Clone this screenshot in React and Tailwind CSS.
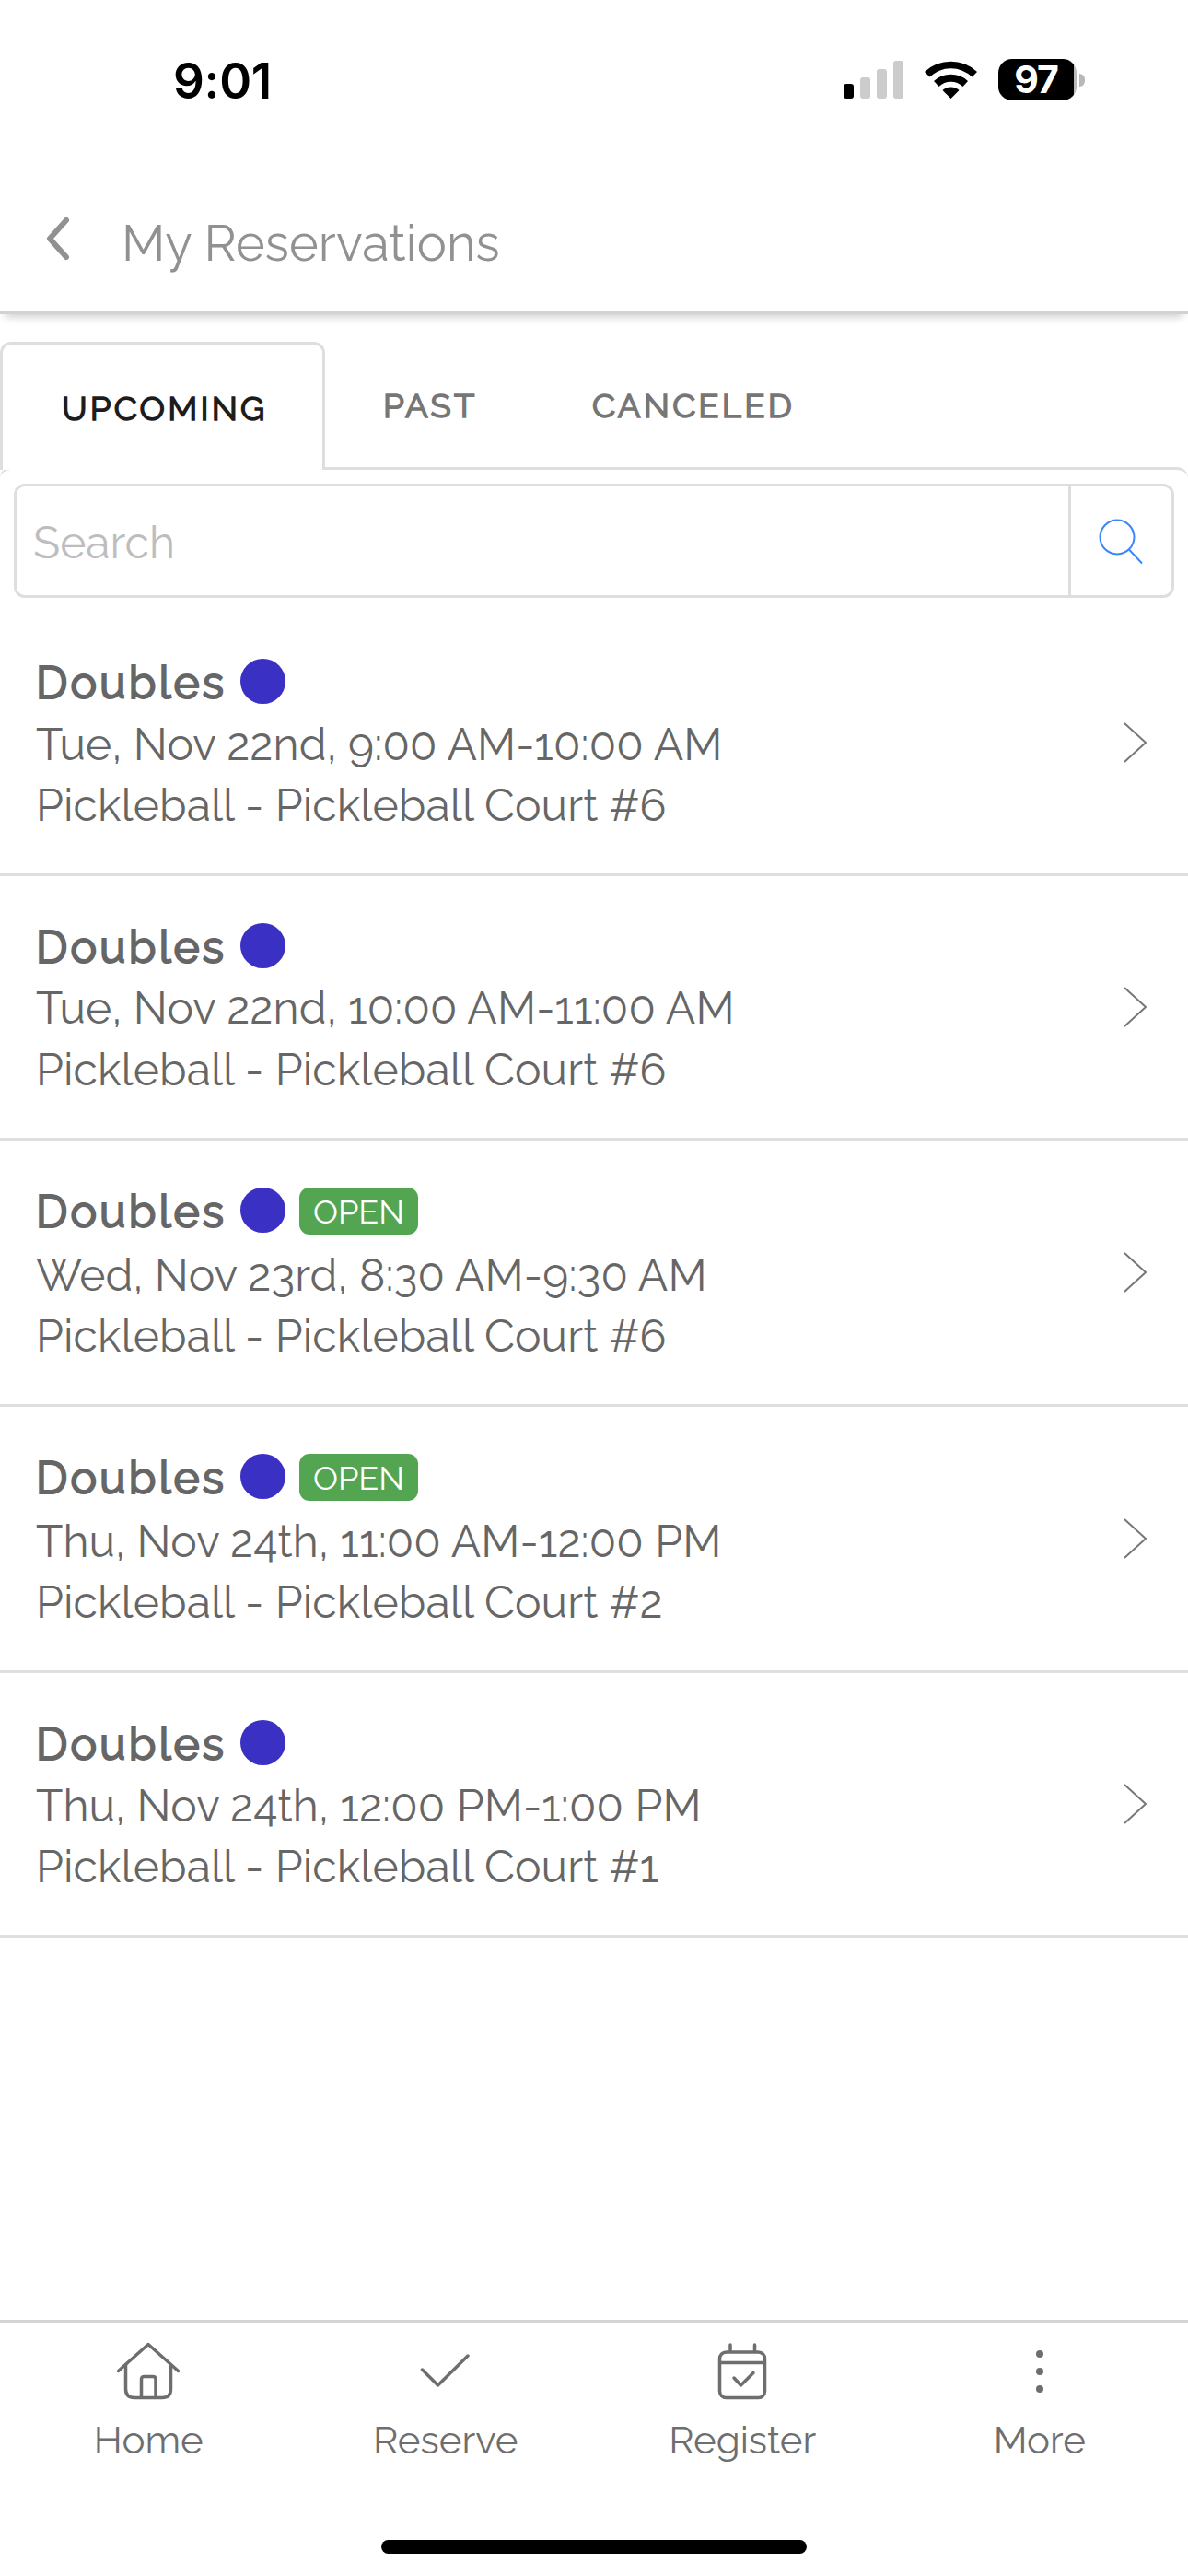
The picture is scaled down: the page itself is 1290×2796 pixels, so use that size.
import clsx from "clsx";

const tabs = ["Upcoming", "Past", "Canceled"];

const reservations = [
  { id: 1, date: "Tue, Nov 22nd, 9:00 AM-10:00 AM", court: "Pickleball - Pickleball Court #6" },
  { id: 2, date: "Tue, Nov 22nd, 10:00 AM-11:00 AM", court: "Pickleball - Pickleball Court #6" },
  { id: 3, date: "Wed, Nov 23rd, 8:30 AM-9:30 AM", court: "Pickleball - Pickleball Court #6", open: true },
  { id: 4, date: "Thu, Nov 24th, 11:00 AM-12:00 PM", court: "Pickleball - Pickleball Court #2", open: true },
  { id: 5, date: "Thu, Nov 24th, 12:00 PM-1:00 PM", court: "Pickleball - Pickleball Court #1" },
];

function StatusBar() {
  return (
    <div className="flex h-[174px] items-start justify-between pl-[188px] pr-[112px] pt-[64px] text-black">
      <span className="font-['Inter',sans-serif] text-[53px] font-semibold leading-[49px] tracking-[-0.3px]">9:01</span>
      <div className="flex items-start">
        <svg className="mt-[2px] h-[41px] w-[65px]" viewBox="0 0 65 41">
          <rect x="0" y="25" width="11" height="16" rx="3" fill="#000" />
          <rect x="18" y="18" width="11" height="23" rx="3" fill="#ccc" />
          <rect x="36" y="9" width="11" height="32" rx="3" fill="#ccc" />
          <rect x="54" y="0" width="11" height="41" rx="3" fill="#ccc" />
        </svg>
        <svg className="ml-[22px] mt-[1px] h-[42px] w-[59px]" viewBox="0 0 59 42">
          <path d="M1 13 A41.5 41.5 0 0 1 58 13 L52.5 18.5 A33.5 33.5 0 0 0 6.5 18.5 Z" />
          <path d="M11 23 A27 27 0 0 1 48 23 L42.5 29 A19 19 0 0 0 16.5 29 Z" />
          <path d="M20.5 33 A13 13 0 0 1 38.5 33 L29.5 42 Z" />
        </svg>
        <div className="ml-[22px] flex items-center">
          <div className="flex h-[45px] w-[85px] items-center justify-center rounded-[15px] bg-[linear-gradient(to_right,#000_82px,#bbb_82px)] pr-[3px] font-['Inter',sans-serif] text-[41px] font-bold leading-[45px] tracking-[-1px] text-white">
            97
          </div>
          <div className="ml-[3px] h-[14px] w-[6px] rounded-r-full bg-[#b8b8b8]" />
        </div>
      </div>
    </div>
  );
}

function Header() {
  return (
    <header className="flex h-[167px] items-start border-b-3 border-[#d2d2d2] pl-[50px] shadow-[0_9px_9px_-6px_rgba(0,0,0,0.2)]">
      <svg className="mt-[61px] h-[48px] w-[26px]" viewBox="0 0 26 48" fill="none" stroke="#929090" strokeWidth="6" strokeLinecap="round" strokeLinejoin="round">
        <path d="M22 4 L4 24 L22 44" />
      </svg>
      <h1 className="ml-[56px] mt-[58px] text-[54px] leading-[64px] tracking-[0.15px] text-[#929090]">My Reservations</h1>
    </header>
  );
}

function Tabs() {
  return (
    <div className="relative z-10 mt-[30px] flex h-[139px] text-[36.5px] leading-[44px] tracking-[3.2px] [-webkit-text-stroke:1.5px]">
      {tabs.map((tab, i) => (
        <button
          key={tab}
          className={clsx(
            "flex items-start uppercase",
            i === 0 && "w-[353px] rounded-t-xl border-3 border-b-0 border-[#dedede] bg-white pl-[64px] pt-[48px] text-[#1c1c1c]",
            i === 1 && "w-[227px] pl-[63px] pt-[48px] text-[#767676]",
            i === 2 && "flex-1 pl-[63px] pt-[48px] text-[#767676]"
          )}
        >
          {tab}
        </button>
      ))}
    </div>
  );
}

function SearchBox() {
  return (
    <div className="mx-[15px] mt-[15px] flex h-[124px] rounded-xl border-3 border-[#dedede]">
      <div className="flex flex-1 items-center pl-[18px] pt-[4px] text-[48px] text-[#bdbdbd]">Search</div>
      <div className="flex w-[112px] items-center border-l-3 border-[#dedede] pl-[30px] pt-[2px]">
        <svg className="h-[50px] w-[50px]" viewBox="0 0 50 50" fill="none" stroke="#3b86fb" strokeWidth="2">
          <circle cx="20" cy="20" r="18.5" />
          <path d="M33 33.5 L47 48.5" />
        </svg>
      </div>
    </div>
  );
}

function ReservationRow({ item }) {
  return (
    <li className="flex items-center border-b-3 border-[#dfdfdf] pb-[40.3px] pl-[39px] pr-[44px] pt-[44px] text-[48px] leading-[66.5px] text-[#666]">
      <div className="flex-1">
        <div className={clsx("flex items-start", item.open ? "h-[69px]" : "h-[66.5px]")}>
          <span className="w-[222px] tracking-[3.1px] [-webkit-text-stroke:2px]">Doubles</span>
          <span className="mt-[7px] h-[49px] w-[49px] rounded-full bg-[#3a30c4]" />
          {item.open && (
            <span className="ml-[15px] mt-[7px] h-[51px] w-[129px] rounded-[11px] bg-[#54a551] text-center text-[36px] leading-[52px] text-white">
              OPEN
            </span>
          )}
        </div>
        <p className="tracking-[0.15px]">{item.date}</p>
        <p className="tracking-[0.1px]">{item.court}</p>
      </div>
      <svg className="mb-[3px] h-[44px] w-[26px]" viewBox="0 0 26 44" fill="none" stroke="#777" strokeWidth="2">
        <path d="M1 1 L24 22 L1 43" />
      </svg>
    </li>
  );
}

const iconProps = {
  className: "h-[70px] w-[72px]",
  viewBox: "0 0 72 70",
  fill: "none",
  stroke: "#6e6e6e",
  strokeWidth: 3.5,
  strokeLinecap: "round",
  strokeLinejoin: "round",
};

const navItems = [
  {
    label: "Home",
    icon: (
      <svg {...iconProps}>
        <path d="M3.5 35.5 L36 6.5 L68.5 35.5" />
        <path d="M11.5 29 V55 Q11.5 64.5 21 64.5 H51 Q60.5 64.5 60.5 55 V29" />
        <path d="M28.5 64 V44.5 Q28.5 41.5 31.5 41.5 H41 Q44 41.5 44 44.5 V64" />
      </svg>
    ),
  },
  {
    label: "Reserve",
    icon: (
      <svg {...iconProps}>
        <path d="M10.5 34 L27.5 51 L60 19" />
      </svg>
    ),
  },
  {
    label: "Register",
    icon: (
      <svg {...iconProps}>
        <rect x="11.5" y="15" width="49" height="49.5" rx="7" />
        <path d="M12 26.5 H60 M23 7 V14 M49.5 7 V14 M27 43 L34.5 51 L48 37.5" />
      </svg>
    ),
  },
  {
    label: "More",
    icon: (
      <svg {...iconProps} fill="#6e6e6e" stroke="none">
        <circle cx="36" cy="17" r="4" />
        <circle cx="36" cy="36" r="4" />
        <circle cx="36" cy="55" r="4" />
      </svg>
    ),
  },
];

export default function App() {
  return (
    <div className="flex h-[2796px] w-[1290px] flex-col overflow-hidden bg-white font-['Raleway','Lato',sans-serif]">
      <StatusBar />
      <Header />
      <Tabs />
      <main className="-mt-[3px] flex-1 rounded-t-xl border-t-3 border-[#dedede]">
        <SearchBox />
        <ul className="mt-[15px]">
          {reservations.map((item) => (
            <ReservationRow key={item.id} item={item} />
          ))}
        </ul>
      </main>
      <nav className="flex h-[239px] border-t-3 border-[#d4d4d4] pt-[17px]">
        {navItems.map(({ label, icon }) => (
          <button key={label} className="flex flex-1 flex-col items-center text-[42px] leading-[50px] text-[#6e6e6e]">
            {icon}
            <span className="mt-[16px]">{label}</span>
          </button>
        ))}
      </nav>
      <div className="mx-auto mb-[24px] h-[15px] w-[462px] shrink-0 rounded-full bg-black" />
    </div>
  );
}
